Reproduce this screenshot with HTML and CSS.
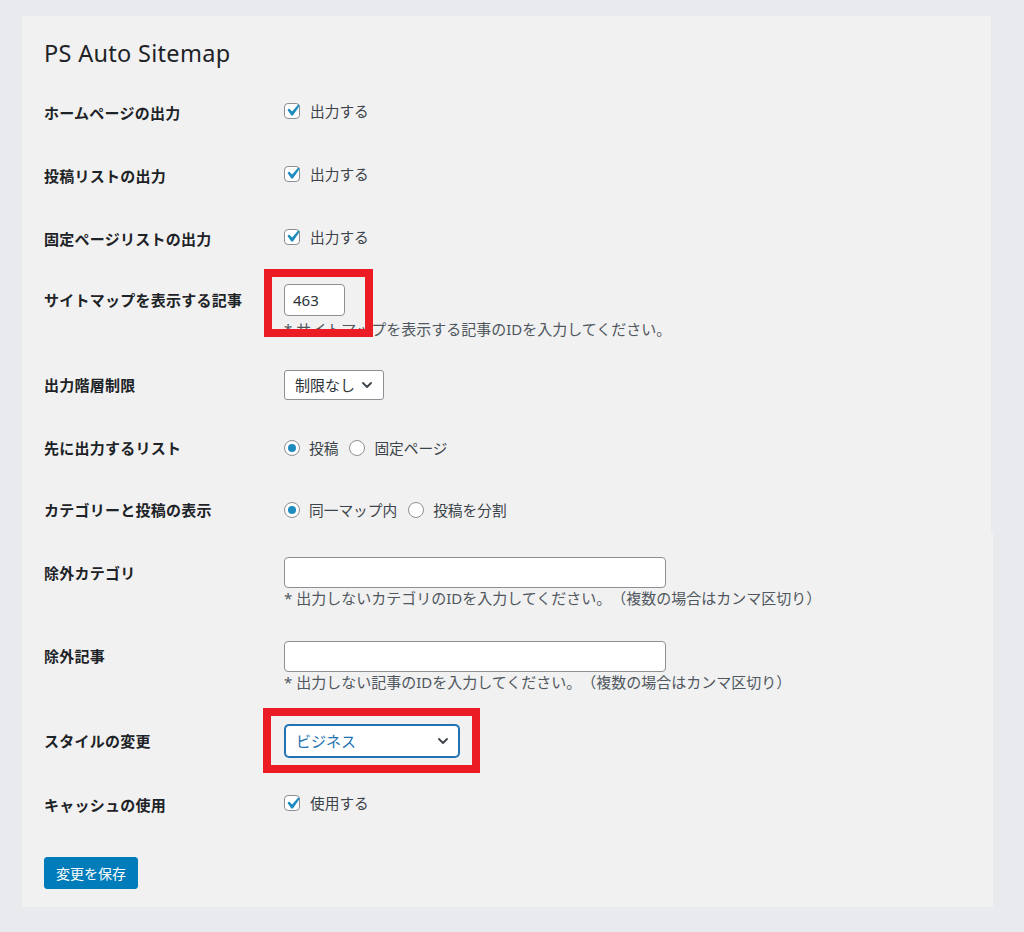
FILE: index.html
```html
<!DOCTYPE html>
<html lang="ja">
<head>
<meta charset="utf-8">
<title>PS Auto Sitemap</title>
<link rel="stylesheet" href="styles.css">
</head>
<body>
<div class="panel">
  <div class="sec sec-top">
    <h1 class="title">PS Auto Sitemap</h1>

    <div class="row r-simple">
      <div class="lbl">ホームページの出力</div>
      <div class="ctl"><label class="chk"><span class="box"><svg viewBox="2 2 16 16" width="16" height="16"><path d="M14.83 4.89l1.34.94-5.81 8.38H9.02L5.78 9.67l1.34-1.25 2.57 2.4z"/></svg></span>出力する</label></div>
    </div>

    <div class="row r-simple">
      <div class="lbl">投稿リストの出力</div>
      <div class="ctl"><label class="chk"><span class="box"><svg viewBox="2 2 16 16" width="16" height="16"><path d="M14.83 4.89l1.34.94-5.81 8.38H9.02L5.78 9.67l1.34-1.25 2.57 2.4z"/></svg></span>出力する</label></div>
    </div>

    <div class="row r-simple">
      <div class="lbl">固定ページリストの出力</div>
      <div class="ctl"><label class="chk"><span class="box"><svg viewBox="2 2 16 16" width="16" height="16"><path d="M14.83 4.89l1.34.94-5.81 8.38H9.02L5.78 9.67l1.34-1.25 2.57 2.4z"/></svg></span>出力する</label></div>
    </div>

    <div class="row r-article">
      <div class="lbl">サイトマップを表示する記事</div>
      <div class="ctl">
        <div class="anchor">
          <input class="txt small" type="text" value="463">
          <span class="redbox red1"></span>
        </div>
        <p class="desc">* サイトマップを表示する記事のIDを入力してください。</p>
      </div>
    </div>

    <div class="row r-depth">
      <div class="lbl">出力階層制限</div>
      <div class="ctl">
        <div class="select sel1"><span>制限なし</span><svg class="chev" width="10" height="6" viewBox="0 0 10 6"><path d="M1 1l4 4 4-4"/></svg></div>
      </div>
    </div>

    <div class="row r-simple">
      <div class="lbl">先に出力するリスト</div>
      <div class="ctl radios">
        <label class="rad"><span class="circle on"></span>投稿</label>
        <label class="rad"><span class="circle"></span>固定ページ</label>
      </div>
    </div>

    <div class="row r-last">
      <div class="lbl">カテゴリーと投稿の表示</div>
      <div class="ctl radios">
        <label class="rad"><span class="circle on"></span>同一マップ内</label>
        <label class="rad"><span class="circle"></span>投稿を分割</label>
      </div>
    </div>
  </div>

  <div class="sec sec-bottom">
    <div class="row r-excl">
      <div class="lbl">除外カテゴリ</div>
      <div class="ctl">
        <input class="txt wide" type="text">
        <p class="desc">* 出力しないカテゴリのIDを入力してください。（複数の場合はカンマ区切り）</p>
      </div>
    </div>

    <div class="row r-excl r-excl2">
      <div class="lbl">除外記事</div>
      <div class="ctl">
        <input class="txt wide" type="text">
        <p class="desc">* 出力しない記事のIDを入力してください。（複数の場合はカンマ区切り）</p>
      </div>
    </div>

    <div class="row r-style">
      <div class="lbl">スタイルの変更</div>
      <div class="ctl">
        <div class="anchor">
          <div class="select sel2"><span>ビジネス</span><svg class="chev" width="10" height="6" viewBox="0 0 10 6"><path d="M1 1l4 4 4-4"/></svg></div>
          <span class="redbox red2"></span>
        </div>
      </div>
    </div>

    <div class="row r-cache">
      <div class="lbl">キャッシュの使用</div>
      <div class="ctl"><label class="chk"><span class="box"><svg viewBox="2 2 16 16" width="16" height="16"><path d="M14.83 4.89l1.34.94-5.81 8.38H9.02L5.78 9.67l1.34-1.25 2.57 2.4z"/></svg></span>使用する</label></div>
    </div>

    <div class="actions"><button class="btn" type="button">変更を保存</button></div>
  </div>
</div>
</body>
</html>
```

FILE: styles.css
```css
html, body {
  margin: 0;
  padding: 0;
}
body {
  background: #e9eaee;
  font-family: "Noto Sans", "Noto Sans CJK JP", sans-serif;
  color: #3c434a;
  font-size: 14.7px;
  text-spacing-trim: space-all;
}
.panel {
  padding: 16px 0 25px 22px;
}
.sec {
  background: #f1f1f1;
  padding-left: 22px;
  box-sizing: border-box;
}
.sec-top {
  width: 969px;
}
.sec-bottom {
  width: 971px;
  padding-bottom: 18px;
}
.title {
  margin: 0;
  height: 65px;
  box-sizing: border-box;
  padding-top: 23px;
  font-size: 23.5px;
  line-height: 28px;
  font-weight: 400;
  letter-spacing: 0.3px;
  color: #1d2327;
}
.row {
  display: flex;
  box-sizing: border-box;
}
.lbl {
  width: 240px;
  flex: none;
  font-weight: 700;
  font-size: 15px;
  line-height: 20px;
  letter-spacing: 0.25px;
  color: #1d2327;
}
.ctl {
  line-height: 20px;
}
.r-simple {
  height: 63px;
  align-items: center;
}
.r-article {
  height: 84px;
}
.r-article .lbl { padding-top: 20px; }
.r-article .ctl { padding-top: 14px; }
.r-depth {
  height: 62px;
  align-items: center;
}
.r-last {
  height: 54px;
  padding-top: 21px;
  align-items: flex-start;
}
.r-excl {
  height: 84px;
}
.r-excl .lbl { padding-top: 30px; }
.r-excl .ctl { padding-top: 24px; }
.r-excl2 .lbl { padding-top: 29px; }
.r-style {
  height: 79px;
  align-items: center;
}
.r-cache {
  height: 50px;
  align-items: center;
}

/* checkbox */
.chk {
  display: inline-flex;
  align-items: center;
  gap: 10px;
}
.box {
  width: 16px;
  height: 16px;
  box-sizing: border-box;
  border: 1px solid #8c8f94;
  border-radius: 4px;
  background: #fff;
  display: flex;
  align-items: center;
  justify-content: center;
  overflow: visible;
}
.box svg {
  width: 19px;
  height: 19px;
  flex: none;
  fill: #1e8cbe;
}

/* radios */
.radios {
  display: flex;
  align-items: center;
  gap: 11px;
}
.rad {
  display: inline-flex;
  align-items: center;
  gap: 9px;
}
.circle {
  width: 16px;
  height: 16px;
  box-sizing: border-box;
  border: 1px solid #8c8f94;
  border-radius: 50%;
  background: #fff;
  display: flex;
  align-items: center;
  justify-content: center;
}
.circle.on::before {
  content: "";
  width: 8px;
  height: 8px;
  border-radius: 50%;
  background: #1e8cbe;
}

/* text inputs */
.txt {
  display: block;
  box-sizing: border-box;
  margin: 0;
  border: 1px solid #8c8f94;
  border-radius: 4px;
  background: #fff;
  font-family: "Noto Sans", "Noto Sans CJK JP", sans-serif;
  font-size: 15px;
  color: #2c3338;
  padding: 0 8px;
  outline: none;
}
.txt.small {
  width: 61px;
  height: 32px;
}
.txt.wide {
  width: 382px;
  height: 31px;
}
.desc {
  margin: 3px 0 0;
  font-size: 15px;
  line-height: 20px;
  color: #50575e;
}
.r-excl .desc {
  margin-top: 0;
}

/* selects */
.select {
  display: flex;
  align-items: center;
  justify-content: space-between;
  box-sizing: border-box;
  background: #fff;
  border: 1px solid #8c8f94;
  border-radius: 3px;
  padding: 0 11px 0 10px;
  color: #2c3338;
  font-size: 15px;
}
.chev path {
  fill: none;
  stroke: #3c434a;
  stroke-width: 1.8;
  stroke-linecap: round;
  stroke-linejoin: round;
}
.sel1 {
  width: 100px;
  height: 30px;
}
.sel2 {
  width: 174px;
  height: 32px;
  margin: 1px;
  border-color: #2271b1;
  box-shadow: 0 0 0 1px #2271b1;
  border-radius: 4px;
  color: #2271b1;
  padding-right: 10px;
}

/* annotations */
.anchor {
  position: relative;
  display: inline-block;
  vertical-align: top;
}
.redbox {
  position: absolute;
  z-index: 2;
  box-sizing: border-box;
  border: 8px solid #ec1c24;
  pointer-events: none;
}
.red1 {
  left: -20px;
  top: -15px;
  width: 109px;
  height: 68px;
}
.red2 {
  left: -21px;
  top: -16px;
  width: 217px;
  height: 65px;
}

/* button */
.actions {
  padding-top: 27px;
}
.btn {
  display: inline-flex;
  align-items: center;
  height: 32px;
  margin: 0;
  padding: 0 11px;
  border: 1px solid #007cba;
  border-radius: 3px;
  background: #007cba;
  color: #fff;
  font-family: "Noto Sans", "Noto Sans CJK JP", sans-serif;
  font-size: 14px;
  cursor: pointer;
}
```
